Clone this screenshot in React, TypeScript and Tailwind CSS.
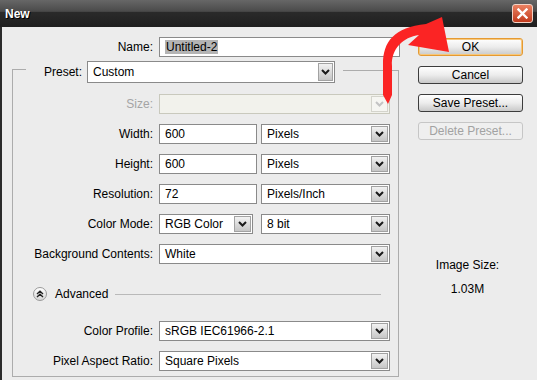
import React from "react";

const Chevron = ({ disabled }: { disabled?: boolean }) => (
  <svg width="9" height="6" viewBox="0 0 9 6">
    <path d="M1 1 L4.5 4.5 L8 1" fill="none" stroke={disabled ? "#c4c4c4" : "#1a1a1a"} strokeWidth="2" />
  </svg>
);

function Select({ value, w, tall, disabled }: { value: string; w: string; tall?: boolean; disabled?: boolean }) {
  return (
    <div
      className={`flex ${w} ${tall ? "h-[22px]" : "h-[20px]"} border ${
        disabled ? "border-[#c9c9bd] bg-[#f2f2ec]" : "border-[#8a8a8a] bg-white"
      }`}
    >
      <div className="flex-1 flex items-center pl-[5px] whitespace-nowrap overflow-hidden">{value}</div>
      <div
        className={`${tall ? "w-[15px]" : "w-[17px]"} m-[1px] flex items-center justify-center border ${
          disabled
            ? "border-[#d4d4cc] bg-[#f6f6f2]"
            : "border-[#a2a2a2] bg-gradient-to-b from-[#f2f2f2] to-[#c6c6c6]"
        }`}
      >
        <Chevron disabled={disabled} />
      </div>
    </div>
  );
}

function Input({ value, w }: { value: string; w: string }) {
  return (
    <div className={`flex items-center ${w} h-[20px] border border-[#8a8a8a] bg-white pl-[5px]`}>{value}</div>
  );
}

function Row({ label, children, disabled }: { label: string; children: React.ReactNode; disabled?: boolean }) {
  return (
    <div className="flex items-center h-[20px]">
      <div className={`w-[140px] text-right ${disabled ? "text-[#a4a4a4]" : "text-black"}`}>{label}</div>
      <div className="ml-[6px] flex items-center">{children}</div>
    </div>
  );
}

function Button({ label, primary, disabled }: { label: string; primary?: boolean; disabled?: boolean }) {
  return (
    <div
      className={`w-[105px] h-[18px] flex items-center justify-center rounded-[3px] border ${
        disabled
          ? "border-[#c6c6c6] bg-[#efefef] text-[#a2a2a2]"
          : primary
          ? "border-[#e59a32] bg-gradient-to-b from-[#ffffff] via-[#ececec] to-[#c9c9c9] text-black shadow-[inset_0_0_0_1px_#f7c77a]"
          : "border-[#3d3d3d] bg-gradient-to-b from-[#ffffff] via-[#ececec] to-[#c9c9c9] text-black"
      }`}
    >
      {label}
    </div>
  );
}

export default function App() {
  return (
    <div className="relative w-[537px] h-[380px] overflow-hidden flex flex-col bg-[#1e1e1e] font-['Liberation_Sans',Arial,sans-serif] text-[12px] text-black">
      {/* Title bar */}
      <div className="h-[27px] flex items-center justify-between pl-[5px] pr-[4px] bg-[linear-gradient(to_bottom,#676767_0%,#4a4a4a_42%,#2a2a2a_46%,#1f1f1f_100%)]">
        <div className="font-bold text-white [text-shadow:1px_1px_0_#000]">New</div>
        <div className="w-[21px] h-[19px] mb-[1px] rounded-[3px] border border-[#f3d3c6] bg-gradient-to-b from-[#ea8060] to-[#c23a1c] flex items-center justify-center">
          <svg width="11" height="11" viewBox="0 0 11 11">
            <path d="M1.5 1.5 L9.5 9.5 M9.5 1.5 L1.5 9.5" stroke="#fff" strokeWidth="2.4" strokeLinecap="square" />
          </svg>
        </div>
      </div>

      {/* Body */}
      <div className="flex-1 flex border-l-2 border-[#2b2b2b] bg-[#ececec]">
        {/* Left column */}
        <div className="w-[398px] flex flex-col pt-[10px] pl-[10px]">
          <div className="flex items-center h-[20px] -ml-[10px]">
            <div className="w-[151px] text-right">Name:</div>
            <div className="ml-[6px] flex items-center w-[241px] h-[20px] border border-[#8a8a8a] bg-white pl-[5px]">
              <span className="bg-[#b4b4b4] px-[1px] leading-[14px]">Untitled-2</span>
            </div>
          </div>

          {/* Group header */}
          <div className="mt-[4px] flex h-[22px] w-[387px]">
            <div className="w-[14px] mt-[8px] border-l border-t border-[#acacac]" />
            <div className="w-[61px] pr-[5px] text-right flex items-center justify-end">Preset:</div>
            <Select value="Custom" w="w-[248px]" tall />
            <div className="ml-[8px] flex-1 mt-[9px] border-r border-t border-[#acacac]" />
          </div>

          {/* Group body */}
          <div className="w-[387px] border-l border-r border-b border-[#acacac] pt-[11px] pb-[5px] flex flex-col">
            <div className="flex flex-col gap-[10px]">
              <Row label="Size:" disabled>
                <Select value="" w="w-[231px]" disabled />
              </Row>
              <Row label="Width:">
                <Input value="600" w="w-[98px]" />
                <div className="ml-[4px]">
                  <Select value="Pixels" w="w-[129px]" />
                </div>
              </Row>
              <Row label="Height:">
                <Input value="600" w="w-[98px]" />
                <div className="ml-[4px]">
                  <Select value="Pixels" w="w-[129px]" />
                </div>
              </Row>
              <Row label="Resolution:">
                <Input value="72" w="w-[98px]" />
                <div className="ml-[4px]">
                  <Select value="Pixels/Inch" w="w-[129px]" />
                </div>
              </Row>
              <Row label="Color Mode:">
                <Select value="RGB Color" w="w-[94px]" />
                <div className="ml-[8px]">
                  <Select value="8 bit" w="w-[129px]" />
                </div>
              </Row>
              <Row label="Background Contents:">
                <Select value="White" w="w-[231px]" />
              </Row>
            </div>

            {/* Advanced */}
            <div className="mt-[23px] h-[14px] flex items-center pl-[20px] pr-[17px]">
              <div className="w-[14px] h-[14px] rounded-full border border-[#9a9a9a] bg-gradient-to-b from-[#ffffff] to-[#d6d6d6] flex items-center justify-center">
                <svg width="8" height="8" viewBox="0 0 8 8">
                  <path d="M1 4 L4 1.2 L7 4 M1 7 L4 4.2 L7 7" fill="none" stroke="#222" strokeWidth="1.4" />
                </svg>
              </div>
              <div className="ml-[8px]">Advanced</div>
              <div className="ml-[7px] flex-1 h-px bg-[#b9b9b9]" />
            </div>

            <div className="mt-[20px] flex flex-col gap-[10px]">
              <Row label="Color Profile:">
                <Select value="sRGB IEC61966-2.1" w="w-[231px]" />
              </Row>
              <Row label="Pixel Aspect Ratio:">
                <Select value="Square Pixels" w="w-[231px]" />
              </Row>
            </div>
          </div>
        </div>

        {/* Right column */}
        <div className="flex-1 flex flex-col pt-[11px] pl-[18px]">
          <div className="flex flex-col gap-[10px]">
            <Button label="OK" primary />
            <Button label="Cancel" />
            <Button label="Save Preset..." />
            <Button label="Delete Preset..." disabled />
          </div>
          <div className="mt-[118px] w-[99px] text-center leading-[14px]">Image Size:</div>
          <div className="mt-[10px] w-[99px] text-center leading-[14px]">1.03M</div>
        </div>
      </div>

      {/* Red arrow overlay */}
      <svg
        className="absolute left-[370px] top-[10px] z-10"
        width="90"
        height="100"
        viewBox="370 10 90 100"
      >
        <path
          d="M388 104 L383 95 L383 64 C383 42 394 27 426 24 L442 17 L449 52 L408 45 L419 35 C403 37 391 49 392 66 L392 95 Z"
          fill="#fb2424"
        />
      </svg>
    </div>
  );
}
